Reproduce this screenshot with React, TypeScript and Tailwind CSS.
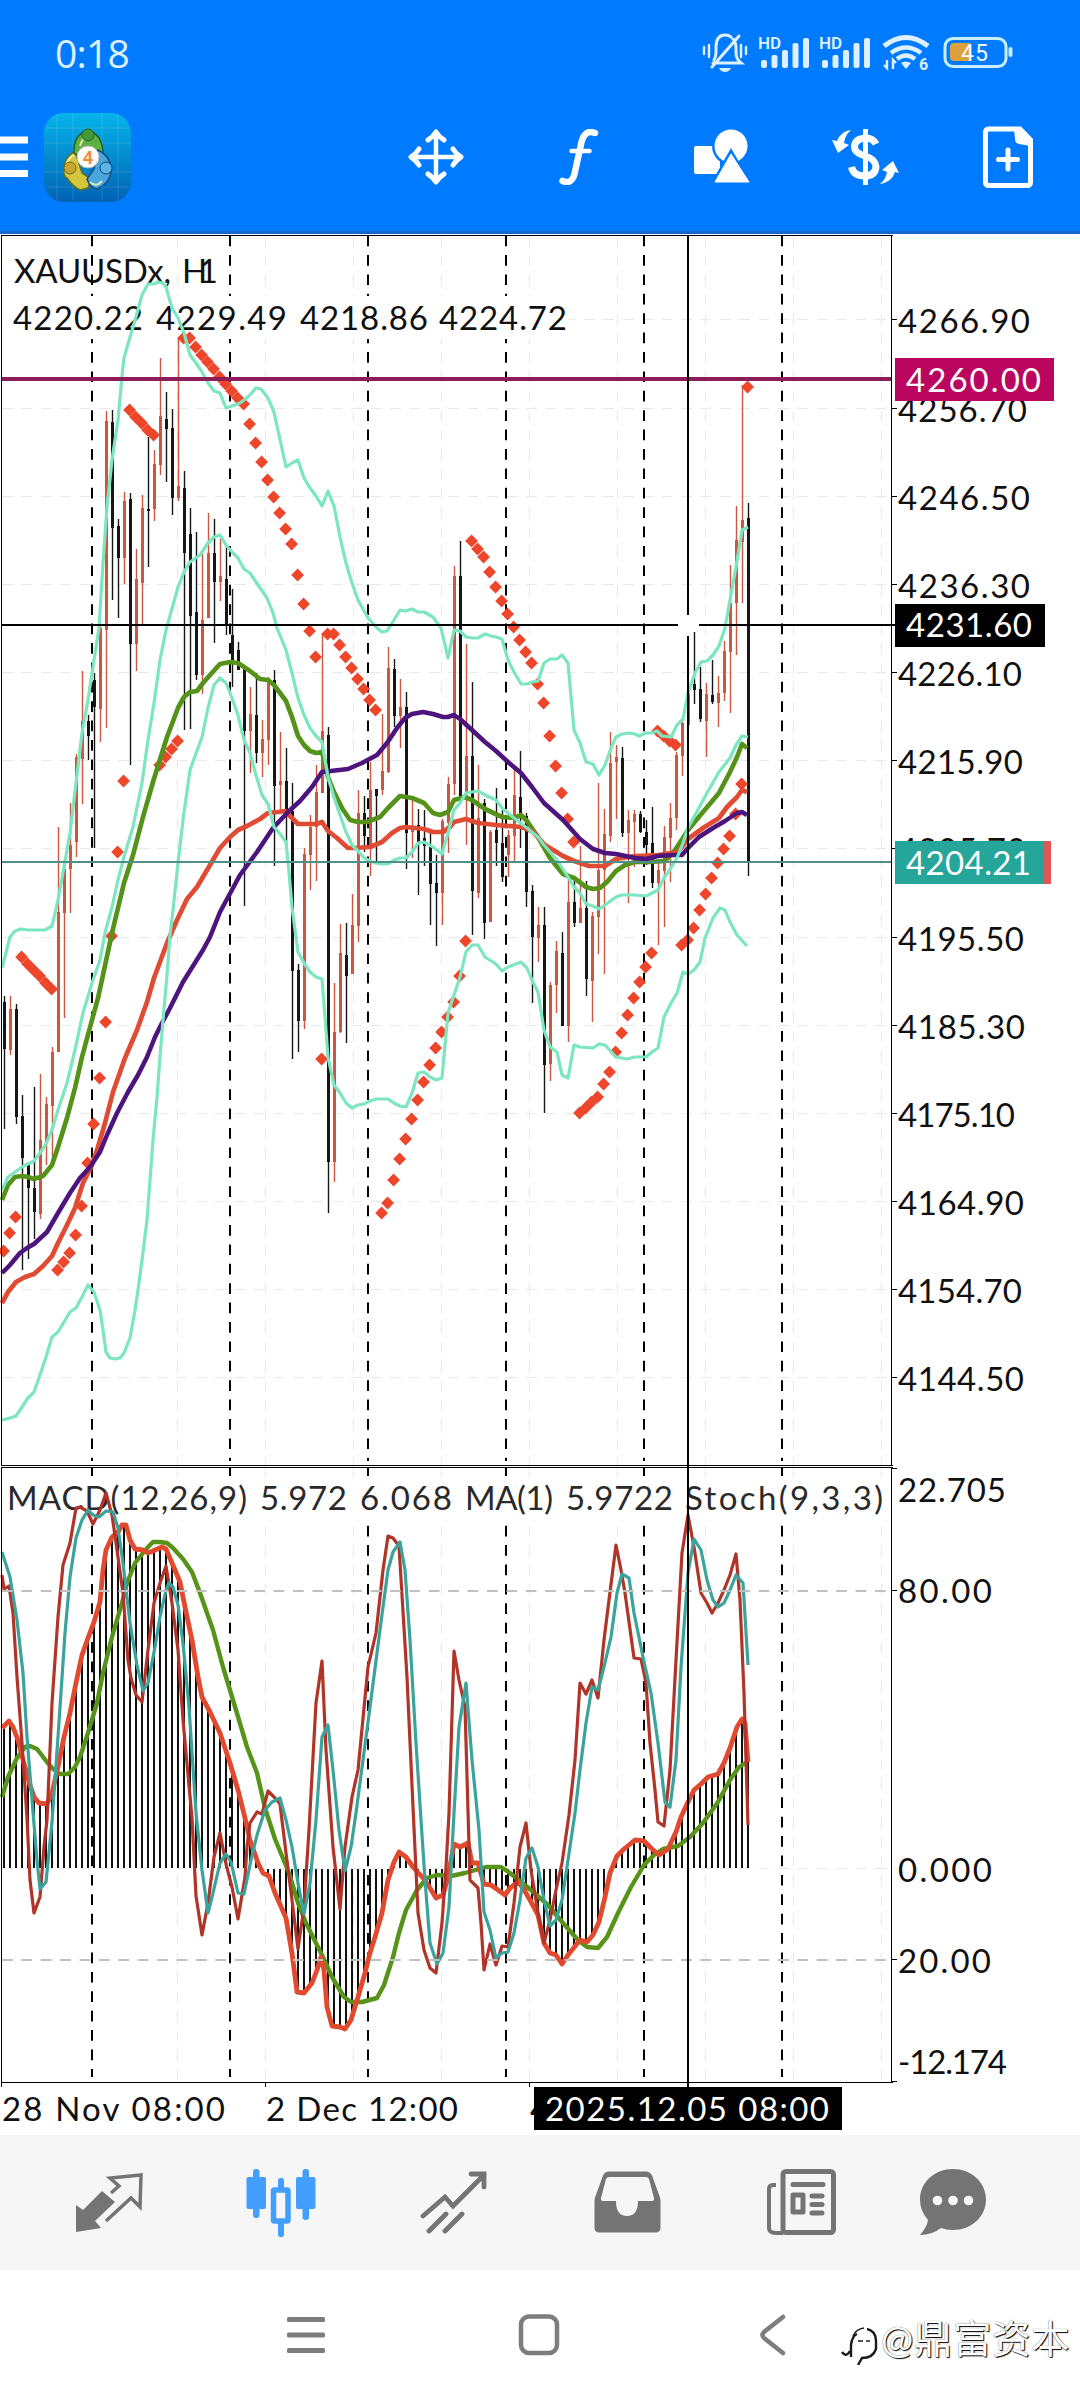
import type { ReactNode } from 'react';

// [high, bodyTop, bodyBottom, low, up]
type Candle = [number, number, number, number, 0 | 1];

const STEP = 6;

const candles: Candle[] = [
  [996, 1002, 1049, 1129, 0], [996, 1009, 1050, 1055, 1], [1004, 1009, 1117, 1124, 0], [1095, 1116, 1158, 1270, 0],
  [1162, 1165, 1188, 1259, 0], [1087, 1188, 1212, 1239, 0], [1074, 1140, 1214, 1219, 1], [1097, 1104, 1143, 1165, 1],
  [1047, 1052, 1106, 1160, 1], [827, 912, 1052, 1052, 1], [860, 869, 913, 1018, 1], [803, 845, 869, 913, 1],
  [754, 757, 842, 857, 1], [671, 721, 759, 804, 1], [715, 721, 736, 760, 0], [673, 680, 707, 848, 0],
  [625, 628, 709, 742, 1], [411, 421, 630, 728, 1], [410, 422, 528, 600, 0], [519, 526, 558, 618, 0],
  [492, 501, 558, 584, 1], [493, 499, 644, 765, 0], [549, 579, 644, 671, 1], [495, 508, 583, 624, 1],
  [437, 509, 511, 567, 0], [450, 464, 509, 521, 1], [358, 416, 465, 475, 1], [392, 419, 429, 482, 0],
  [409, 428, 498, 515, 0], [338, 486, 498, 501, 1], [471, 488, 553, 730, 0], [508, 534, 616, 729, 0],
  [532, 612, 675, 680, 0], [553, 620, 675, 694, 1], [513, 553, 618, 618, 1], [519, 553, 582, 643, 0],
  [539, 576, 582, 601, 1], [547, 579, 625, 635, 0], [589, 635, 660, 687, 0], [642, 650, 670, 670, 0],
  [665, 668, 731, 906, 0], [687, 714, 731, 773, 1], [673, 715, 753, 763, 0], [720, 739, 753, 777, 1],
  [677, 682, 740, 765, 1], [670, 680, 786, 866, 0], [732, 781, 785, 810, 1], [748, 781, 813, 850, 0],
  [783, 811, 971, 1059, 0], [964, 970, 1021, 1052, 0], [848, 854, 1021, 1029, 1], [815, 827, 855, 890, 1],
  [765, 792, 827, 881, 1], [633, 731, 793, 793, 1], [727, 735, 1162, 1213, 0], [983, 1032, 1162, 1182, 1],
  [924, 953, 1032, 1033, 1], [923, 955, 976, 1043, 0], [894, 925, 974, 974, 1], [790, 813, 926, 942, 1],
  [796, 813, 836, 852, 0], [762, 790, 847, 876, 1], [789, 789, 796, 862, 0], [714, 771, 790, 795, 1],
  [647, 668, 772, 773, 1], [659, 669, 716, 727, 0], [679, 707, 716, 748, 1], [692, 707, 833, 869, 0],
  [796, 830, 832, 858, 1], [809, 825, 843, 895, 0], [810, 838, 846, 866, 0], [833, 847, 884, 925, 0],
  [855, 883, 893, 946, 0], [819, 821, 893, 925, 1], [777, 784, 823, 853, 1], [566, 576, 784, 795, 1],
  [541, 576, 797, 797, 0], [644, 756, 793, 845, 1], [682, 756, 891, 935, 0], [765, 818, 893, 898, 1],
  [799, 803, 923, 939, 0], [830, 832, 922, 922, 1], [788, 830, 843, 866, 0], [810, 843, 877, 882, 0],
  [830, 835, 855, 877, 1], [768, 795, 836, 862, 1], [751, 797, 813, 848, 0], [813, 816, 892, 907, 0],
  [885, 891, 937, 1003, 0], [907, 925, 938, 962, 1], [907, 925, 1065, 1113, 0], [982, 985, 1064, 1081, 1],
  [941, 951, 985, 1013, 1], [932, 953, 1026, 1026, 0], [877, 902, 1026, 1042, 1], [877, 902, 923, 927, 0],
  [846, 908, 923, 923, 1], [881, 908, 979, 996, 0], [912, 916, 981, 1022, 1], [783, 870, 917, 954, 1],
  [809, 834, 870, 974, 1], [732, 763, 836, 842, 1], [745, 757, 762, 819, 1], [747, 758, 833, 837, 0],
  [810, 820, 833, 903, 1], [810, 814, 822, 867, 1], [811, 814, 832, 833, 0], [820, 832, 845, 865, 0],
  [807, 843, 883, 888, 0], [860, 870, 883, 945, 1], [826, 837, 871, 927, 1], [803, 818, 838, 882, 1],
  [752, 755, 818, 830, 1], [719, 723, 756, 776, 1], [690, 693, 725, 725, 1], [632, 684, 690, 704, 0],
  [667, 689, 719, 722, 0], [683, 694, 721, 757, 1], [660, 695, 702, 704, 0], [676, 693, 703, 727, 1],
  [641, 651, 693, 701, 1], [565, 603, 652, 713, 1], [506, 540, 603, 655, 1], [385, 520, 542, 603, 1],
  [503, 518, 862, 876, 0],
];

// parabolic SAR, one value per candle
const sar = [
  1251, 1233, 1217, 957, 964, 970, 976, 983, 989, 1270, 1262, 1253, 1235, 1206, 1163, 1124, 1078, 1022, 936, 852,
  781, 410, 417, 423, 430, 435, 765, 757, 749, 741, 338, 338, 347, 355, 362, 369, 377, 384, 391, 398,
  404, 424, 443, 462, 480, 497, 513, 529, 544, 575, 604, 631, 657, 1059, 634, 634, 645, 657, 668, 679,
  689, 700, 710, 1213, 1203, 1180, 1159, 1139, 1119, 1100, 1082, 1065, 1048, 1032, 1017, 1002, 976, 941, 541, 549,
  557, 572, 587, 601, 614, 627, 640, 652, 663, 684, 703, 736, 766, 793, 819, 842, 1113, 1108, 1102, 1097,
  1084, 1072, 1052, 1033, 1015, 998, 982, 967, 953, 731, 736, 741, 745, 945, 940, 928, 910, 894, 878, 863,
  849, 836, 814, 784, 387,
];

const bandUpper =
  '2,968 10,937 15,931 21,929 28,930 45,930 52,926 58,900 64,867 70,833 76,783 82,733 88,700 94,660 99,628 103,563 107,507 112,460 118,420 122,376 124,358 130,337 136,317 142,295 148,284 154,284 158,282 163,283 166,287 172,308 178,318 184,333 190,355 196,363 202,372 208,383 214,391 220,393 226,408 232,406 240,403 248,397 256,388 261,389 268,398 274,412 286,467 292,463 298,460 304,478 310,488 316,496 322,506 328,491 334,506 340,537 346,563 352,583 358,600 368,618 377,628 382,632 387,631 394,620 400,610 406,611 412,609 418,612 424,612 433,617 441,628 448,658 454,630 460,631 466,637 472,638 478,638 485,634 491,636 496,637 502,639 508,660 514,672 521,684 527,684 532,682 538,681 544,663 550,659 557,659 562,655 568,663 574,730 580,743 586,762 593,764 599,775 605,765 611,748 616,737 622,734 629,733 635,734 639,736 646,733 652,733 657,731 662,736 671,737 677,725 683,719 688,693 695,673 701,662 707,661 713,655 719,646 725,628 730,600 736,567 742,530 748,527';
const bandMiddle =
  '2,1190 8,1177 15,1172 22,1167 34,1161 40,1153 46,1144 52,1130 58,1110 67,1083 75,1050 83,1013 92,983 100,960 105,933 112,907 118,880 124,857 133,827 142,783 148,740 154,703 160,660 166,630 178,587 184,572 190,562 200,555 208,543 214,537 220,535 226,545 232,552 238,558 244,569 250,573 256,582 267,598 273,613 277,628 286,650 292,673 298,698 304,715 310,728 316,736 322,742 328,777 334,797 340,815 346,832 352,845 358,851 364,858 370,861 376,863 382,864 388,864 394,860 400,858 406,858 412,852 418,843 424,842 433,847 442,854 448,833 454,810 460,803 466,793 472,792 478,791 485,795 496,800 502,808 514,818 527,828 538,837 544,845 557,860 568,877 574,887 580,893 586,904 593,906 599,909 605,905 616,897 622,895 635,895 646,896 658,890 664,878 671,868 677,858 683,843 688,828 694,817 707,793 719,772 730,758 736,745 742,736 748,737';
const bandLower =
  '2,1420 10,1418 16,1416 22,1407 28,1398 34,1392 40,1375 46,1357 52,1337 58,1332 64,1322 70,1312 76,1308 82,1297 88,1285 94,1292 100,1310 103,1330 106,1352 110,1358 115,1359 120,1358 124,1353 130,1338 135,1310 138,1290 142,1260 147,1220 150,1180 153,1140 157,1097 160,1057 163,1020 167,975 170,935 173,910 178,863 183,820 190,770 202,737 208,708 214,685 220,678 226,683 232,698 238,715 244,740 250,753 256,775 262,795 268,804 274,827 280,834 286,842 289,872 292,907 298,952 304,963 310,972 316,977 322,979 325,1017 328,1057 334,1085 340,1093 346,1103 352,1108 358,1105 364,1104 370,1101 376,1099 388,1099 394,1103 400,1106 406,1107 412,1093 418,1073 424,1072 430,1077 436,1080 442,1078 448,1013 454,995 460,977 466,952 472,945 478,945 485,957 496,964 502,971 508,967 521,962 527,968 532,980 538,992 544,1030 550,1047 557,1052 562,1075 568,1078 574,1045 580,1047 593,1048 599,1044 605,1045 616,1057 627,1059 635,1057 646,1057 652,1052 658,1048 664,1017 671,1003 677,993 683,972 688,974 694,970 700,962 705,938 713,918 720,908 725,910 730,922 737,935 747,946';
const maFast =
  '2,1200 8,1185 15,1177 22,1176 28,1177 34,1179 43,1176 52,1165 58,1147 67,1118 75,1088 82,1057 92,1020 98,998 103,975 112,933 124,883 133,855 143,817 153,782 162,753 167,737 178,708 184,697 190,692 197,691 203,683 210,675 220,664 230,662 238,663 244,667 250,671 260,679 268,680 274,685 280,693 286,701 292,717 298,736 304,745 310,751 316,753 322,752 328,777 334,792 342,808 350,820 358,822 367,822 380,817 388,808 400,796 412,798 424,803 433,813 440,815 448,812 454,800 465,797 472,800 485,809 502,817 514,818 521,815 527,821 538,837 550,858 563,874 574,878 586,887 593,889 600,888 607,882 616,871 625,865 635,862 649,862 665,861 675,850 683,838 688,830 703,812 719,793 730,772 737,757 742,744 747,748';
const maMid =
  '2,1303 8,1292 16,1282 25,1277 34,1274 43,1266 52,1256 58,1243 67,1225 75,1208 83,1183 92,1165 98,1147 105,1123 113,1092 125,1058 137,1030 147,1002 154,978 167,943 177,920 187,899 197,887 210,865 220,848 230,837 238,830 247,826 260,819 268,813 278,812 285,811 292,818 298,824 316,824 322,822 328,831 337,838 348,848 355,848 370,847 382,842 392,833 400,828 406,827 424,829 433,832 443,832 450,827 454,822 466,819 478,823 496,825 521,827 532,831 545,845 563,856 574,861 589,866 605,866 616,859 635,856 658,855 678,852 688,839 703,828 719,818 727,807 737,797 742,790 747,792';
const maSlow =
  '2,1273 10,1265 20,1253 27,1248 34,1244 47,1232 58,1213 70,1193 80,1178 90,1167 100,1152 107,1135 117,1113 128,1092 138,1075 147,1057 155,1037 162,1023 170,1008 183,982 203,950 210,937 220,912 233,888 240,875 257,852 273,828 288,812 300,801 312,787 322,772 348,769 362,763 377,755 387,743 397,728 405,718 412,714 423,712 433,714 443,717 448,717 454,715 460,719 472,730 485,742 496,751 508,762 521,773 532,787 544,803 563,820 580,839 593,849 605,853 616,854 635,858 646,859 658,856 673,855 682,855 688,848 699,837 713,828 725,821 737,813 742,812 747,815';

const macd =
  '2,1728 9,1721 13,1727 18,1740 23,1760 30,1785 34,1797 39,1803 47,1804 52,1793 58,1767 64,1737 70,1713 76,1683 82,1655 88,1638 94,1622 100,1602 103,1570 106,1550 112,1537 118,1532 122,1525 126,1525 130,1540 135,1549 143,1550 148,1553 155,1550 162,1547 166,1549 172,1563 180,1582 185,1607 192,1640 198,1677 202,1697 210,1712 220,1733 230,1763 238,1790 245,1818 250,1840 258,1863 263,1873 269,1876 275,1893 286,1918 292,1953 297,1992 304,1993 312,1983 317,1970 321,1957 324,1970 327,2007 332,2026 340,2027 345,2029 351,2020 358,1997 365,1973 370,1953 375,1937 382,1913 388,1880 394,1862 399,1852 406,1857 413,1867 424,1879 430,1888 436,1898 443,1895 448,1877 454,1844 460,1847 468,1843 472,1863 478,1863 484,1884 491,1885 498,1890 505,1895 510,1888 518,1882 523,1888 530,1900 538,1915 544,1943 550,1953 556,1955 562,1964 568,1955 580,1940 587,1942 593,1935 599,1922 605,1897 610,1873 617,1856 624,1849 635,1840 644,1841 652,1849 659,1855 668,1849 676,1832 681,1817 688,1802 694,1790 701,1784 708,1777 718,1774 724,1763 730,1748 737,1727 742,1719 745,1723 748,1762';
const macdSignal =
  '2,1797 8,1777 17,1758 25,1747 30,1746 37,1749 47,1762 52,1768 60,1774 68,1774 75,1767 80,1757 88,1733 97,1703 103,1673 112,1637 122,1603 127,1583 135,1563 143,1553 148,1547 153,1542 160,1542 167,1543 173,1548 183,1559 192,1572 200,1593 213,1630 223,1667 233,1700 247,1747 257,1773 265,1808 275,1839 289,1873 298,1903 306,1923 322,1955 332,1977 344,1997 351,2002 362,2002 377,1998 384,1985 393,1957 399,1933 406,1910 417,1890 427,1878 437,1875 451,1876 465,1873 486,1867 501,1867 510,1873 525,1885 548,1905 563,1923 578,1940 587,1947 598,1948 607,1937 618,1913 631,1887 644,1865 654,1855 663,1849 678,1846 690,1837 703,1823 718,1802 730,1780 739,1767 747,1762';
const stochMain =
  '2,1575 4,1589 9,1586 13,1613 17,1677 22,1743 27,1818 30,1880 34,1913 40,1897 44,1847 47,1820 52,1703 58,1617 63,1565 70,1543 76,1508 80,1507 87,1511 93,1524 100,1510 106,1493 112,1515 117,1550 123,1593 128,1660 131,1678 136,1695 142,1702 148,1650 154,1603 160,1583 166,1566 172,1603 178,1650 183,1720 192,1818 196,1896 202,1935 208,1903 214,1857 220,1833 226,1864 232,1887 238,1919 245,1877 247,1847 250,1823 257,1812 262,1814 268,1791 274,1797 280,1804 286,1853 292,1900 298,1949 304,1907 309,1830 316,1703 322,1661 326,1750 333,1847 340,1909 345,1847 352,1797 358,1770 368,1667 376,1633 383,1570 388,1536 393,1538 399,1546 407,1677 413,1807 418,1913 424,1950 430,1968 436,1973 442,1923 446,1867 449,1813 454,1651 459,1680 465,1707 470,1880 478,1888 481,1923 484,1970 490,1944 496,1965 502,1946 508,1947 514,1903 520,1847 526,1823 531,1870 538,1913 544,1943 550,1920 556,1890 562,1863 569,1815 575,1760 580,1683 586,1694 592,1680 598,1698 604,1640 609,1600 616,1545 621,1570 625,1593 634,1658 641,1659 646,1683 650,1743 655,1790 658,1822 664,1826 670,1770 676,1660 682,1553 688,1515 694,1547 701,1593 707,1603 712,1613 718,1603 724,1590 730,1575 736,1554 740,1600 744,1693 748,1825';
const stochSignal =
  '2,1552 10,1577 17,1620 23,1673 27,1737 33,1812 37,1860 40,1889 46,1882 52,1822 58,1737 65,1633 70,1577 76,1538 82,1520 88,1510 93,1515 99,1517 106,1511 113,1512 118,1528 123,1563 130,1623 137,1665 143,1691 148,1683 155,1647 160,1617 166,1590 169,1583 173,1587 178,1605 183,1643 189,1707 196,1813 202,1870 208,1913 213,1893 220,1863 226,1854 231,1862 238,1893 244,1894 251,1860 257,1835 265,1810 272,1802 280,1798 286,1820 292,1847 298,1883 304,1914 310,1883 316,1820 322,1737 328,1725 333,1770 339,1830 345,1871 351,1847 356,1813 363,1760 370,1707 377,1653 383,1607 388,1570 393,1552 400,1542 405,1570 410,1640 416,1743 421,1820 425,1880 430,1943 437,1964 443,1953 449,1907 454,1813 459,1727 466,1683 472,1760 479,1830 484,1912 490,1930 496,1958 502,1953 508,1952 514,1933 520,1900 526,1858 532,1848 538,1867 544,1900 550,1926 556,1920 562,1900 567,1867 575,1813 580,1770 586,1723 592,1687 598,1690 604,1667 611,1637 617,1593 622,1574 629,1578 634,1613 643,1657 651,1693 658,1743 665,1802 670,1807 676,1760 681,1667 688,1573 694,1539 701,1550 707,1580 713,1600 718,1607 724,1603 730,1590 736,1575 743,1583 748,1665';

const gridX = [177, 265, 353, 441, 529, 617, 705, 793, 881];
const gridY = [319, 408, 496, 584, 672, 760, 848, 937, 1025, 1113, 1201, 1289, 1377];
const sessionX = [92, 230, 368, 506, 644, 782];

// [text, x, baseline, width]
const axisLabels: [string, number, number, number][] = [
  ['4266.90', 898, 333, 132],
  ['4256.70', 898, 421.5, 129],
  ['4246.50', 898, 509.5, 132],
  ['4236.30', 898, 597.5, 132],
  ['4226.10', 898, 686, 124],
  ['4215.90', 898, 774, 125],
  ['4205.70', 898, 862, 128],
  ['4195.50', 898, 951, 126],
  ['4185.30', 898, 1039, 127],
  ['4175.10', 898, 1127, 117],
  ['4164.90', 898, 1215, 126],
  ['4154.70', 898, 1303, 124],
  ['4144.50', 898, 1391, 126],
  ['22.705', 898, 1502, 108],
  ['80.00', 898, 1603, 94],
  ['0.000', 898, 1882, 94],
  ['20.00', 898, 1973, 93],
  ['-12.174', 898, 2074, 109],
];

// [word, x, width]
type Word = [string, number, number];

const symbolWords: Word[] = [['XAUUSDx,', 14, 157], ['H1', 182, 36]];
const priceWords: Word[] = [['4220.22', 13, 130], ['4229.49', 156, 131], ['4218.86', 300, 128], ['4224.72', 439, 128]];
const indicatorWords: Word[] = [
  ['MACD(12,26,9)', 7, 240],
  ['5.972', 260, 87],
  ['6.068', 360, 92],
  ['MA(1)', 465, 88],
  ['5.9722', 566, 107],
  ['Stoch(9,3,3)', 685, 198],
];

const macdPoints = macd.split(' ').map((p) => p.split(',').map(Number));

function macdAt(x: number) {
  for (let i = 1; i < macdPoints.length; i++) {
    const [x0, y0] = macdPoints[i - 1];
    const [x1, y1] = macdPoints[i];
    if (x <= x1) return y0 + ((y1 - y0) * (x - x0)) / (x1 - x0);
  }
  return macdPoints[macdPoints.length - 1][1];
}

function Line({ points, color, width }: { points: string; color: string; width: number }) {
  return <polyline points={points} fill="none" stroke={color} strokeWidth={width} strokeLinejoin="round" />;
}

function Label({ x, y, w, fill = '#111', children }: { x: number; y: number; w: number; fill?: string; children: string }) {
  return (
    <text x={x} y={y} textLength={w} fill={fill} fontSize="33">
      {children}
    </text>
  );
}

function Caption({ words, y, fill = '#111' }: { words: Word[]; y: number; fill?: string }) {
  return (
    <text y={y} fill={fill} fontSize="33">
      {words.map(([word, x, w]) => (
        <tspan key={x} x={x} textLength={w}>{word}</tspan>
      ))}
    </text>
  );
}

function Chart() {
  return (
    <svg
      className="block h-[1901px] w-[1080px] bg-white font-['Lato','Noto_Sans',sans-serif]"
      viewBox="0 234 1080 1901"
    >
      {/* Grid */}
      <g stroke="#e4ebe8" strokeWidth="1" strokeDasharray="10.7 8.7" shapeRendering="crispEdges">
        {gridX.map((x) => (
          <g key={x}>
            <line x1={x + 0.5} x2={x + 0.5} y1="236" y2="1465" />
            <line x1={x + 0.5} x2={x + 0.5} y1="1468" y2="2082" />
          </g>
        ))}
        {gridY.map((y) => (
          <line key={y} x1="2" x2="892" y1={y + 0.5} y2={y + 0.5} />
        ))}
        <line x1="2" x2="898" y1="1868.5" y2="1868.5" />
      </g>

      {/* Session separators */}
      <g stroke="#000" strokeWidth="2" strokeDasharray="10.7 8.7">
        {sessionX.map((x) => (
          <g key={x}>
            <line x1={x} x2={x} y1="235.6" y2="1461" />
            <line x1={x} x2={x} y1="1467.5" y2="2077" />
          </g>
        ))}
      </g>

      {/* Captions */}
      <rect x="3" y="296" width="566" height="43" fill="#fff" />
      <rect x="3" y="1476" width="881" height="46" fill="#fff" />
      <Caption words={symbolWords} y={283} />
      <Caption words={priceWords} y={330} />
      <Caption words={indicatorWords} y={1510} fill="#2a2a2a" />

      {/* Price panel */}
      <g>
        {candles.map(([high, top, bottom, low, up], i) => (
          <g key={i} fill={up ? '#cb5740' : '#161616'}>
            <rect x={3.8 + i * STEP} y={high} width="1.4" height={low - high} />
            <rect x={3 + i * STEP} y={top} width="3" height={bottom - top} />
          </g>
        ))}
        {sar.map((y, i) => {
          const x = 3.6 + i * STEP;
          return <path key={i} d={`M${x} ${y - 6.4}l6.4 6.4-6.4 6.4-6.4-6.4z`} fill="#ee462b" />;
        })}
        <Line points={maFast} color="#55921a" width={4.7} />
        <Line points={maMid} color="#df4b33" width={4.7} />
        <Line points={maSlow} color="#4c147c" width={4.5} />
        <Line points={bandUpper} color="#7be6bf" width={3.2} />
        <Line points={bandMiddle} color="#7be6bf" width={3.2} />
        <Line points={bandLower} color="#7be6bf" width={3.2} />
        <line x1="2" x2="892" y1="379" y2="379" stroke="#8d1d59" strokeWidth="4" />
        <line x1="2" x2="892" y1="862" y2="862" stroke="#4f8f89" strokeWidth="2" />
      </g>

      {/* Indicator panel */}
      <g>
        {candles.map((_, i) => {
          const y = macdAt(4 + i * STEP);
          return (
            <rect
              key={i}
              x={3 + i * STEP}
              y={Math.min(y, 1869)}
              width="2"
              height={Math.abs(y - 1868)}
              fill="#111"
              shapeRendering="crispEdges"
            />
          );
        })}
        <Line points={macdSignal} color="#579219" width={4.4} />
        <Line points={macd} color="#e24a30" width={4.8} />
        <Line points={stochMain} color="#b03428" width={3.2} />
        <Line points={stochSignal} color="#3aa39b" width={3.2} />
        <g stroke="#c0c0c0" strokeWidth="2" strokeDasharray="10.7 8.7">
          <line x1="2" x2="892" y1="1591" y2="1591" />
          <line x1="2" x2="892" y1="1960" y2="1960" />
        </g>
      </g>

      {/* Frame */}
      <g stroke="#000" strokeWidth="1" shapeRendering="crispEdges">
        <path d="M1.5 235v1231M1 235.5h892M891.5 235v1231M1 1465.5h892M1 1467.5h892M1.5 1467v620M891.5 1467v616M1 2082.5h892M265.5 2083v4M529.5 2083v4" fill="none" />
        {gridY.map((y) => (
          <line key={y} x1="892" x2="897" y1={y + 0.5} y2={y + 0.5} />
        ))}
        <path d="M892 1468.5h5M892 1590.5h5M892 1959.5h5M892 2081.5h5" />
      </g>

      {/* Crosshair */}
      <path d="M688 235V615M688 636V2088M2 625H678M699 625H895" stroke="#000" strokeWidth="2" fill="none" />

      {/* Axis labels */}
      {axisLabels.map(([text, x, y, w]) => (
        <Label key={text} x={x} y={y} w={w}>{text}</Label>
      ))}
      <rect x="895" y="358" width="159" height="43" fill="#ba065f" />
      <Label x={906} y={391.5} w={135} fill="#fff">4260.00</Label>
      <rect x="895" y="604" width="150" height="43" />
      <Label x={906} y={637} w={126} fill="#fff">4231.60</Label>
      <rect x="895" y="841" width="149" height="43" fill="#26a69a" />
      <rect x="1044" y="841" width="7" height="43" fill="#e05656" />
      <Label x={906} y={874.5} w={125} fill="#fff">4204.21</Label>

      <Label x={2} y={2121} w={223}>28 Nov 08:00</Label>
      <Label x={266} y={2121} w={192}>2 Dec 12:00</Label>
      <Label x={530} y={2121} w={180}>4 Dec 16:00</Label>
      <rect x="534" y="2087" width="308" height="43" />
      <Label x={545} y={2121} w={284} fill="#fff">2025.12.05 08:00</Label>
    </svg>
  );
}

function Signal() {
  return (
    <svg className="h-[36px] w-[50px]" viewBox="759 34 50 36" fill="#dcf0ff">
      <text x="758" y="48.500" fontSize="17" fontWeight="600" className="font-['Roboto',sans-serif]">HD</text>
      <rect x="761" y="60" width="6" height="8" rx="2" />
      <rect x="771.5" y="55" width="6" height="13" rx="2" />
      <rect x="782" y="50" width="6" height="18" rx="2" />
      <rect x="792.5" y="43" width="6" height="25" rx="2" />
      <rect x="803" y="38" width="6" height="30" rx="2" />
    </svg>
  );
}

function StatusBar() {
  return (
    <div className="flex h-[104px] items-center pl-[55px] text-[#dcf0ff]">
      <span className="w-[647px] font-['Open_Sans',sans-serif] text-[39px] leading-none tracking-[-0.8px]">0:18</span>
      <svg className="h-[40px] w-[46px]" viewBox="702 32 46 40" fill="none" stroke="#dcf0ff" strokeWidth="3" strokeLinecap="round">
        <path d="M713 63h28q-5-4-5-10v-5q0-6-3-9M714 60q2-3 2-8v-5q0-12 9-12 4 0 6 2M739 36L712 67" />
        <path d="M704 47v7M709 45v12M741 45v12M746 47v7" strokeWidth="2.4" />
        <path d="M719 68h12q-2 4-6 4t-6-4z" fill="#dcf0ff" stroke="none" />
      </svg>
      <div className="ml-[11px]"><Signal /></div>
      <div className="ml-[11px]"><Signal /></div>
      <svg className="ml-[12px] h-[42px] w-[50px]" viewBox="881 32 50 42" fill="none" stroke="#dcf0ff">
        <path d="M883 47q22-17 44 0" strokeWidth="5" />
        <path d="M890 54q15-11 30 0" strokeWidth="4.5" />
        <path d="M896 60q9-7 18 0" strokeWidth="4.5" />
        <path d="M900 64q5-3 10 0l-5 6z" fill="#dcf0ff" stroke="none" />
        <path d="M886 61v8l-3-3M892 70v-9l3 3" strokeWidth="2.4" />
        <text x="918" y="70.500" fontSize="16" fontWeight="700" fill="#dcf0ff" stroke="none" className="font-['Roboto',sans-serif]">6</text>
      </svg>
      <svg className="ml-[11px] h-[32px] w-[70px]" viewBox="942 36 70 32">
        <rect x="944" y="38.500" width="61" height="28" rx="8" fill="none" stroke="#c9eeff" strokeWidth="3" />
        <path d="M953 43h16v18h-16q-4 0-4-4v-10q0-4 4-4z" fill="#dba23c" />
        <rect x="1007.500" y="47" width="4" height="10" rx="2" fill="#c9eeff" />
        <text x="960" y="61" fontSize="23" textLength="27" fill="#eefaff" className="font-['Roboto',sans-serif]">45</text>
      </svg>
    </div>
  );
}

function AppLogo() {
  return (
    <svg className="ml-[16px] h-[89px] w-[87px]" viewBox="44 113 87 89">
      <defs>
        <linearGradient id="logoBg" x1="0" y1="0" x2="0" y2="1">
          <stop offset="0" stopColor="#06b4ea" />
          <stop offset="1" stopColor="#0262b4" />
        </linearGradient>
      </defs>
      <rect x="44" y="113" width="87" height="89" rx="20" fill="url(#logoBg)" />
      <path d="M57 114v86M73 113v88M102 113v88M118 114v86M45 128h85M44 143h87M44 172h87M45 187h85" stroke="#fff" strokeOpacity=".12" />
      <path d="M75 151q-11 7-11 17-1 9 3 10 5 8 13 12l8-2 3-9-9-6z" fill="#d5c63c" stroke="#5f7422" strokeWidth="1.500" />
      <path d="M74 153q-1-18 14-23 15 5 15 24l-6 8-13-1z" fill="#5fb043" stroke="#245f2b" strokeWidth="1.500" />
      <path d="M98 150q14 7 13 22-2 12-14 17-7-1-10-10l7-10z" fill="#4ba6dc" stroke="#0e4d80" strokeWidth="1.500" />
      <path d="M66 165q3-8 8-10M80 146q2-8 8-9M90 182q6 6 12-1" fill="none" stroke="#f2f7bd" strokeWidth="2" strokeOpacity=".8" />
      <circle cx="88" cy="135" r="6" fill="#439a37" stroke="#245f2b" />
      <circle cx="70" cy="168" r="6" fill="#c7a62d" stroke="#6e6a20" />
      <circle cx="106" cy="168" r="6" fill="#5bb3e8" stroke="#0e4d80" />
      <circle cx="88" cy="157" r="11" fill="#fff" stroke="#b8b8b8" />
      <text x="82.500" y="164" fontSize="19" fontWeight="600" fill="#ef8a3c" className="font-['Roboto',sans-serif]">4</text>
    </svg>
  );
}

function Toolbar() {
  return (
    <div className="flex h-[106px] items-center text-white">
      <svg className="h-[42px] w-[28px]" viewBox="0 138 28 42" fill="#fff">
        <path d="M0 138.500h28v7H0zM0 155.500h28v7H0zM0 172h28v7H0z" />
      </svg>
      <AppLogo />
      <svg className="ml-[277px] h-[56px] w-[56px]" viewBox="408 129 56 56" fill="none" stroke="#fff" strokeWidth="4.500" strokeLinejoin="round" strokeLinecap="round">
        <path d="M436 133v48M412 157h48" />
        <path d="M428 140q5-3 8-8 3 5 8 8M428 174q5 3 8 8 3-5 8-8M419 149q-3 5-8 8 5 3 8 8M453 149q3 5 8 8-5 3-8 8" strokeWidth="5" />
      </svg>
      <svg className="ml-[95px] h-[56px] w-[40px]" viewBox="559 129 40 56" fill="none" stroke="#fff" strokeLinecap="round">
        <path d="M595 133q-10-4-13.500 9l-7 32q-3 11-12 7" strokeWidth="6.500" />
        <path d="M571.500 151h18" strokeWidth="4.500" />
      </svg>
      <svg className="ml-[95px] h-[56px] w-[56px]" viewBox="694 129 56 56" fill="#fff">
        <rect x="694" y="146" width="26" height="28" rx="2" />
        <circle cx="731" cy="146" r="19" fill="#007aff" />
        <circle cx="731" cy="146" r="16.500" />
        <path d="M731 148l21 37h-42z" fill="#007aff" />
        <path d="M731 154l18 28h-34z" stroke="#fff" strokeLinejoin="round" />
      </svg>
      <svg className="ml-[82px] h-[56px] w-[67px]" viewBox="832 129 67 56" fill="none" stroke="#fff">
        <path d="M876 144q-3-6-10.500-6-11 1-11 9 0 6 10.500 9t11 11q-1 9-11.500 9-11 0-13-9" strokeWidth="7" />
        <path d="M865.500 129v56" strokeWidth="5" />
        <path d="M851 130q-10 1-14 11l-5-1 6 13 11-8-5-2q1-8 7-13zM880 184q12-2 15-12l4 1-6-12-11 9 5 2q-1 7-7 12z" fill="#fff" stroke="none" />
      </svg>
      <svg className="ml-[84px] h-[62px] w-[50px]" viewBox="983 126 50 62" fill="none" stroke="#fff">
        <path d="M1020 129l10.500 11V182q0 3.500-3.500 3.500h-38q-3.500 0-3.500-3.500v-49.500q0-3.500 3.500-3.500z" strokeWidth="5" />
        <path d="M1014 129h7l10 11v6l-12-2q-4-1-4-5z" fill="#fff" stroke="none" />
        <path d="M1008 150v19M998.500 159.500h19" strokeWidth="5" strokeLinecap="round" />
      </svg>
    </div>
  );
}

function TabIcon({ x, w, className, children }: { x: number; w: number; className: string; children: ReactNode }) {
  return (
    <svg className={className} viewBox={`${x} 2168 ${w} 68`} fill="none">
      {children}
    </svg>
  );
}

function TabBar() {
  return (
    <div className="flex h-[135px] items-center bg-[#f6f6f6] pl-[75px]">
      <TabIcon x={75} w={68} className="h-[68px] w-[68px]">
        <path d="M76 2204l7 5 19-19 13 11-20 19 6 7-25 4z" fill="#747474" />
        <path d="M111 2192l8-7-9-8 31-3-1 32-9-9-25 23" stroke="#747474" strokeWidth="3.500" />
      </TabIcon>
      <TabIcon x={246} w={70} className="ml-[103px] h-[68px] w-[70px]">
        <g fill="#429eff">
          <rect x="246.500" y="2176" width="19.500" height="32" rx="2" />
          <rect x="253" y="2168" width="6.500" height="49" rx="3" />
          <rect x="296" y="2176" width="19.500" height="32" rx="2" />
          <rect x="302.500" y="2168" width="6.500" height="51" rx="3" />
          <rect x="278" y="2177" width="6" height="12" rx="2.500" />
          <rect x="278" y="2220" width="6" height="16" rx="2.500" />
        </g>
        <rect x="273.500" y="2189" width="14.500" height="31" rx="1" stroke="#429eff" strokeWidth="5.500" />
      </TabIcon>
      <TabIcon x={420} w={68} className="ml-[104px] h-[68px] w-[68px]">
        <path d="M423 2215l22-19 8 9 31-31M471 2173h13v13M429 2230l17-17M445 2230l17-17" stroke="#747474" strokeWidth="4.800" strokeLinecap="round" />
      </TabIcon>
      <TabIcon x={594} w={67} className="ml-[106px] h-[68px] w-[67px]">
        <path d="M609 2170.500h37q4 0 6 4l8 22q.500 2 .500 5v25q0 5-5 5h-56q-5 0-5-5v-25q0-3 .500-5l8-22q2-4 6-4z" fill="#747474" />
        <path d="M609 2176h37q2 0 3 2l5 19q.500 3-2 3h-14q0 15-11 15t-11-15h-13q-2.500 0-2-3l5-19q1-2 3-2z" fill="#f6f6f6" />
      </TabIcon>
      <TabIcon x={766} w={70} className="ml-[105px] h-[68px] w-[70px]">
        <g stroke="#747474">
          <rect x="783" y="2170.500" width="50.500" height="61" rx="3" strokeWidth="5" />
          <path d="M776 2184h-3q-4 0-4 4v39q0 5 7 5h7" strokeWidth="4" />
          <path d="M793 2183.500h30M812 2195h10M812 2203.500h10M812 2212h10" strokeWidth="5" strokeLinecap="round" />
          <rect x="793" y="2194" width="10" height="17" strokeWidth="5" strokeLinejoin="round" />
        </g>
      </TabIcon>
      <TabIcon x={919} w={68} className="ml-[83px] h-[68px] w-[68px]">
        <path d="M953 2168c18 0 33 13 33 30.500s-15 30.500-33 30.500q-7 0-12-2-9 7-21 7 7-8 8-15-8-9-8-20.500c0-17.500 15-30.500 33-30.500z" fill="#747474" />
        <circle cx="937.500" cy="2199.500" r="4.800" fill="#f6f6f6" />
        <circle cx="953" cy="2199.500" r="4.800" fill="#f6f6f6" />
        <circle cx="968.500" cy="2199.500" r="4.800" fill="#f6f6f6" />
      </TabIcon>
    </div>
  );
}

function SystemNav() {
  return (
    <div className="flex h-[130px] items-center bg-white pl-[287px]">
      <svg className="h-[44px] w-[38px]" viewBox="287 2313 38 44" fill="#7d7d7d">
        <rect x="287" y="2317" width="38" height="5" rx="1.500" />
        <rect x="287" y="2332.500" width="38" height="5" rx="1.500" />
        <rect x="287" y="2348" width="38" height="5" rx="1.500" />
      </svg>
      <svg className="ml-[193px] h-[44px] w-[42px]" viewBox="518 2313 42 44" fill="none">
        <rect x="521" y="2316.500" width="36" height="36.500" rx="8" stroke="#7d7d7d" strokeWidth="4.500" />
      </svg>
      <svg className="ml-[199px] h-[44px] w-[28px]" viewBox="759 2313 28 44" fill="none">
        <path d="M783 2317l-19 15q-3 3 0 6l19 15" stroke="#7d7d7d" strokeWidth="4.500" strokeLinecap="round" />
      </svg>
      <svg className="mt-[16px] ml-[54px] h-[44px] w-[38px]" viewBox="841 2321 38 44" fill="none" stroke="#1a1a1a" strokeWidth="2.400">
        <path d="M842 2352q4 6 8-1M851 2357v-12q1-9 6-11M867 2329q9 2 9 12v8q-3 9-14 9l-4 7" />
        <path d="M858 2341h5M866 2341h4M853 2336q3-7 11-8" strokeWidth="1.600" />
      </svg>
      <span className="mt-[6px] ml-[2px] text-nowrap font-['Lato','Noto_Sans_CJK_SC',sans-serif] text-[38.500px] leading-none tracking-[0.6px] text-white [text-shadow:1px_1px_1px_#000,0_0_1px_#555]">
        @鼎富资本
      </span>
    </div>
  );
}

export default function App() {
  return (
    <div className="flex h-[2400px] w-[1080px] flex-col overflow-hidden bg-white">
      <header className="h-[234px] shrink-0 border-b-[3px] border-[#1769c9] bg-[#007aff]">
        <StatusBar />
        <Toolbar />
      </header>
      <Chart />
      <TabBar />
      <SystemNav />
    </div>
  );
}
